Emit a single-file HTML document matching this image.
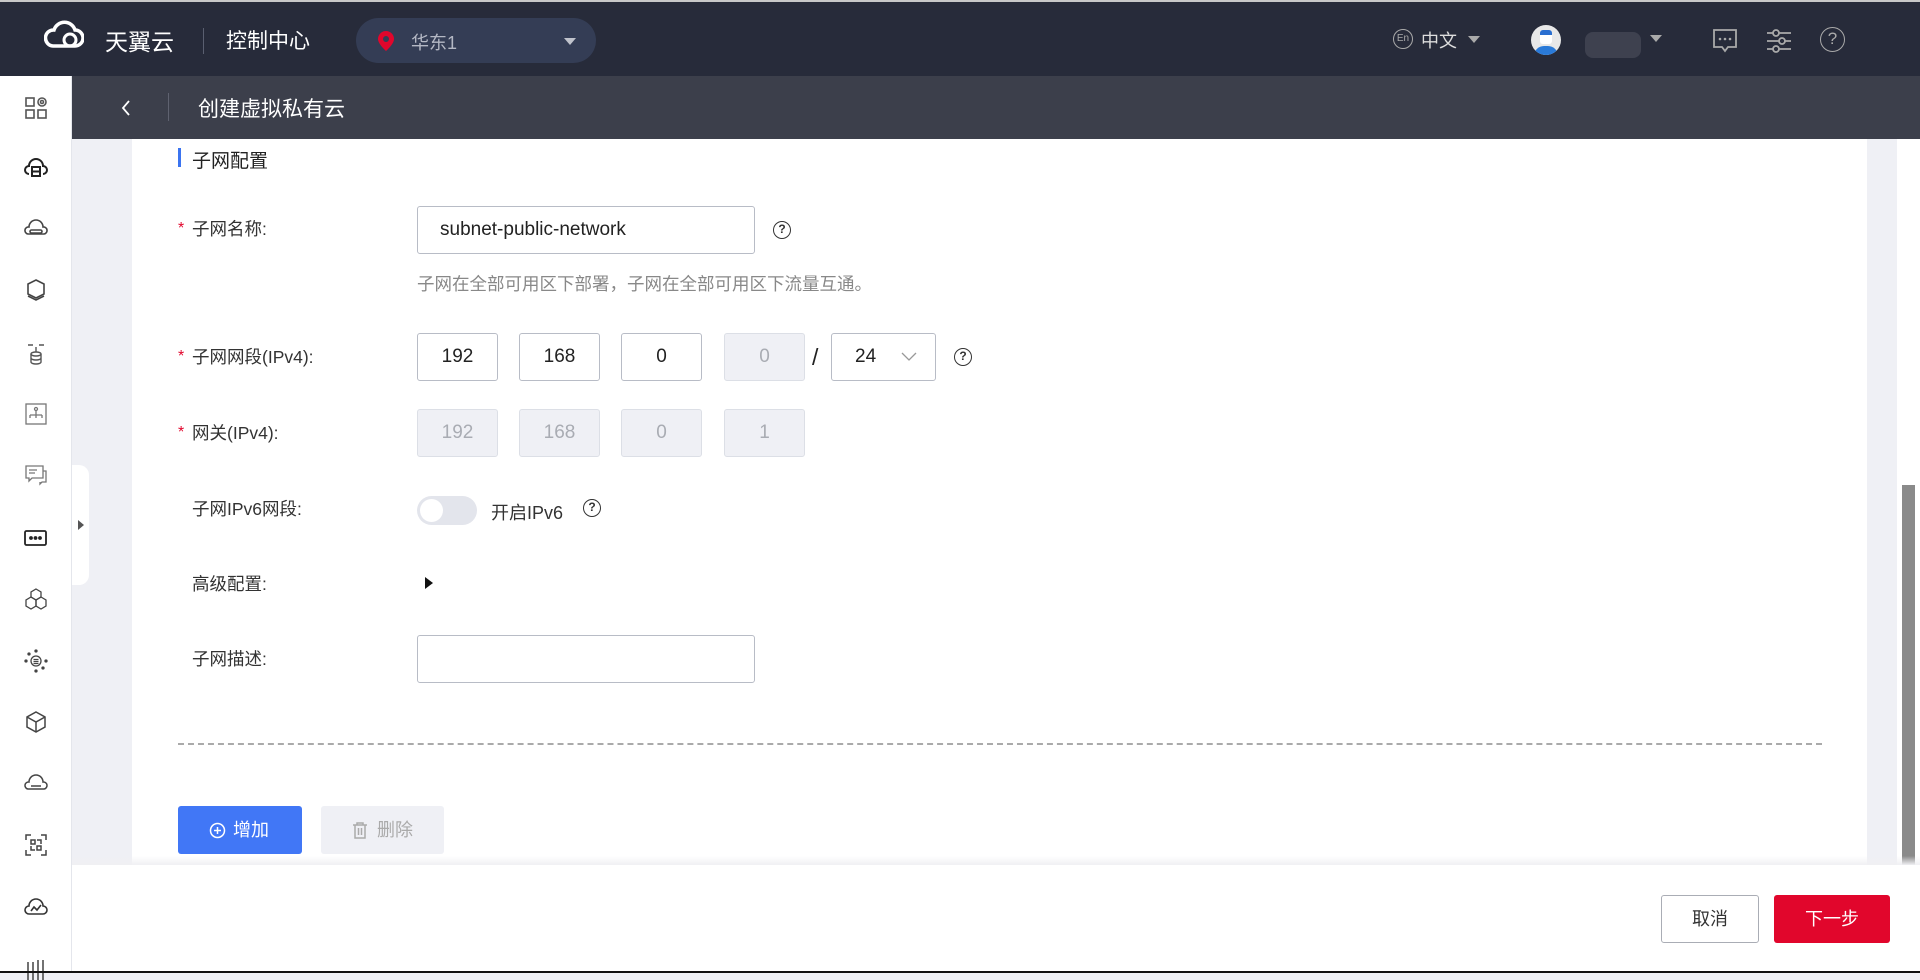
<!DOCTYPE html>
<html><head><meta charset="utf-8">
<style>
*{margin:0;padding:0;box-sizing:border-box}
body{width:1920px;height:973px;overflow:hidden;background:#eff0f5;font-family:"Liberation Sans","Noto Sans CJK SC",sans-serif;position:relative;color:#222}
.abs{position:absolute}
#top{left:0;top:0;width:1920px;height:76px;background:#272b3a;border-top:2px solid #c8c8c8}
#sub{left:72px;top:76px;width:1848px;height:63px;background:#3c3f4b}
#side{left:0;top:76px;width:72px;height:897px;background:#fff;border-right:1px solid #e4e6ec}
#card{left:132px;top:139px;width:1735px;height:726px;background:#fff}
.lbl{position:absolute;left:192px;font-size:17.5px;color:#333;line-height:20px}
.star{position:absolute;left:178px;color:#e1062c;font-size:16px;line-height:20px}
.inp{position:absolute;height:48px;border:1px solid #b8bcc6;border-radius:3px;background:#fff;font-size:19px;line-height:46px;text-align:center;color:#222}
.dis{background:#eff0f5;border-color:#dcdfe6;color:#a9acb3}
.q{position:absolute;width:18px;height:18px;border:1.5px solid #333;border-radius:50%;font-size:12px;line-height:15px;text-align:center;font-weight:bold;color:#333}
.ic{position:absolute;left:24px;width:24px;height:24px}
</style></head><body>
<div id="top" class="abs">
 <svg class="abs" style="left:44px;top:16px" width="40" height="34" viewBox="0 0 40 34"><path d="M9 28 H31 A8 8 0 0 0 31 12 A11 11 0 0 0 10 12 A8 8 0 0 0 9 28 Z" fill="none" stroke="#fff" stroke-width="3.5"/><circle cx="26" cy="22" r="6" fill="none" stroke="#fff" stroke-width="3"/></svg>
 <div class="abs" style="left:105px;top:21px;font-size:23px;color:#fff">天翼云</div>
 <div class="abs" style="left:203px;top:26px;width:1px;height:26px;background:#5a5f70"></div>
 <div class="abs" style="left:226px;top:23px;font-size:21px;color:#fff">控制中心</div>
 <div class="abs" style="left:356px;top:16px;width:240px;height:45px;border-radius:23px;background:#343d55">
  <svg class="abs" style="left:22px;top:13px" width="16" height="20" viewBox="0 0 16 20"><path d="M8 0 A8 8 0 0 1 16 8 C16 13 8 20 8 20 C8 20 0 13 0 8 A8 8 0 0 1 8 0Z" fill="#e1062c"/><circle cx="8" cy="8" r="3" fill="#343d55"/></svg>
  <div class="abs" style="left:55px;top:11px;font-size:18px;color:#b4b8c4">华东1</div>
  <div class="abs" style="left:208px;top:20px;border-left:6px solid transparent;border-right:6px solid transparent;border-top:7px solid #c0c3cc"></div>
 </div>
 <div class="abs" style="left:1393px;top:27px;width:20px;height:20px;border:1.5px solid #aaa;border-radius:50%;font-size:10px;color:#aaa;text-align:center;line-height:17px">En</div>
 <div class="abs" style="left:1421px;top:25px;font-size:18px;color:#ddd">中文</div>
 <div class="abs" style="left:1468px;top:34px;border-left:6px solid transparent;border-right:6px solid transparent;border-top:7px solid #aaa"></div>
 <div class="abs" style="left:1531px;top:23px;width:30px;height:30px;border-radius:50%;background:#e8e8e8;overflow:hidden"><div class="abs" style="left:9px;top:5px;width:12px;height:14px;background:#fff;border-top:5px solid #2a6fd0;border-radius:3px"></div><div class="abs" style="left:3px;top:21px;width:24px;height:12px;background:#2a7ad8;border-radius:10px 10px 0 0"></div></div>
 <div class="abs" style="left:1585px;top:30px;width:56px;height:26px;background:#3e414f;border-radius:8px"></div>
 <div class="abs" style="left:1650px;top:33px;border-left:6px solid transparent;border-right:6px solid transparent;border-top:7px solid #aaa"></div>
 <svg class="abs" style="left:1712px;top:26px" width="26" height="26" viewBox="0 0 26 26"><path d="M2 2H24V19H16L13 23L10 19H2Z" fill="none" stroke="#aaa" stroke-width="1.8"/><circle cx="8" cy="11" r="1.3" fill="#aaa"/><circle cx="13" cy="11" r="1.3" fill="#aaa"/><circle cx="18" cy="11" r="1.3" fill="#aaa"/></svg>
 <svg class="abs" style="left:1766px;top:26px" width="26" height="26" viewBox="0 0 26 26" fill="none" stroke="#aaa" stroke-width="1.8"><path d="M1 5H7M13 5H25M1 13H13M19 13H25M1 21H7M13 21H25"/><circle cx="10" cy="5" r="3"/><circle cx="16" cy="13" r="3"/><circle cx="10" cy="21" r="3"/></svg>
 <div class="abs" style="left:1820px;top:25px;width:25px;height:25px;border:1.8px solid #aaa;border-radius:50%;font-size:17px;color:#aaa;text-align:center;line-height:22px">?</div>
</div>
<div id="sub" class="abs">
 <svg class="abs" style="left:48px;top:23px" width="12" height="18" viewBox="0 0 12 18"><path d="M9 2L3 9L9 16" fill="none" stroke="#fff" stroke-width="1.8"/></svg>
 <div class="abs" style="left:96px;top:17px;width:1px;height:28px;background:#5f6270"></div>
 <div class="abs" style="left:126px;top:17px;font-size:21px;color:#fff">创建虚拟私有云</div>
</div>
<div id="side" class="abs">
 <svg class="ic" style="top:20px" viewBox="0 0 24 24" fill="none" stroke="#555" stroke-width="1.6"><rect x="2" y="2" width="8" height="8"/><rect x="2" y="14" width="8" height="8"/><rect x="14" y="14" width="8" height="8"/><circle cx="18" cy="6" r="4"/><circle cx="18" cy="6" r="1.5"/></svg>
 <svg class="ic" style="top:80px" viewBox="0 0 24 24" fill="none" stroke="#222" stroke-width="2"><path d="M5 18A4 4 0 0 1 5 10A7 7 0 0 1 19 10A4 4 0 0 1 19 18"/><rect x="8" y="11" width="8" height="9"/><path d="M8 15.5H16"/></svg>
 <svg class="ic" style="top:141px" viewBox="0 0 24 24" fill="none" stroke="#444" stroke-width="1.6"><path d="M4 17A3.5 3.5 0 0 1 5 10A7 7 0 0 1 19 10A3.5 3.5 0 0 1 20 17Z"/><rect x="6" y="13" width="12" height="3" rx="1.5"/></svg>
 <svg class="ic" style="top:202px" viewBox="0 0 24 24" fill="none" stroke="#444" stroke-width="1.6"><path d="M12 2L20 6V16L12 20L4 16V6Z"/><path d="M4 18L12 22L20 18"/></svg>
 <svg class="ic" style="top:265px" viewBox="0 0 24 24" fill="none" stroke="#555" stroke-width="1.4"><ellipse cx="12" cy="13" rx="5" ry="2"/><path d="M7 13V21A5 2 0 0 0 17 21V13M7 17A5 2 0 0 0 17 17M12 11V6M4 4H9M15 4H20"/></svg>
 <svg class="ic" style="top:326px" viewBox="0 0 24 24" fill="none" stroke="#777" stroke-width="1.3"><rect x="2" y="2" width="20" height="20"/><circle cx="12" cy="7" r="1.5"/><path d="M12 9V13M6 13H18M6 13V16M12 13V16M18 13V16"/></svg>
 <svg class="ic" style="top:387px" viewBox="0 0 24 24" fill="none" stroke="#777" stroke-width="1.3"><path d="M2 3H19V15H8L5 18V15H2Z"/><path d="M19 8H22V19H18L16 21V19"/><path d="M5 7H13M5 10H11"/></svg>
 <svg class="ic" style="top:450px" viewBox="0 0 24 24" fill="none" stroke="#222" stroke-width="1.8"><rect x="1" y="5" width="21" height="14" rx="1.5"/><circle cx="7" cy="12" r="1" fill="#222"/><circle cx="11.5" cy="12" r="1" fill="#222"/><circle cx="16" cy="12" r="1" fill="#222"/></svg>
 <svg class="ic" style="top:511px" viewBox="0 0 24 24" fill="none" stroke="#444" stroke-width="1.3"><path d="M12 2L17 5V10L12 13L7 10V5Z"/><path d="M7 10L12 13V19L7 22L2 19V13Z"/><path d="M17 10L22 13V19L17 22L12 19V13Z"/></svg>
 <svg class="ic" style="top:573px" viewBox="0 0 24 24" fill="none" stroke="#444" stroke-width="1.3"><circle cx="12" cy="12" r="5"/><path d="M9.5 10.5H14.5M9.5 12.5H14.5M9.5 14.5H14.5"/><circle cx="12" cy="2" r="1" fill="#444"/><circle cx="2" cy="12" r="1" fill="#444"/><circle cx="22" cy="12" r="1" fill="#444"/><circle cx="12" cy="22" r="1" fill="#444"/><circle cx="5" cy="5" r="1" fill="#444"/><circle cx="19" cy="19" r="1" fill="#444"/></svg>
 <svg class="ic" style="top:634px" viewBox="0 0 24 24" fill="none" stroke="#444" stroke-width="1.5"><path d="M12 2L21 7V17L12 22L3 17V7Z"/><path d="M3 7L12 12L21 7M12 12V22"/></svg>
 <svg class="ic" style="top:696px" viewBox="0 0 24 24" fill="none" stroke="#444" stroke-width="1.5"><path d="M4 17A3.5 3.5 0 0 1 5 10A7 7 0 0 1 19 10A3.5 3.5 0 0 1 20 17Z"/><path d="M7 14H17"/></svg>
 <svg class="ic" style="top:757px" viewBox="0 0 24 24" fill="none" stroke="#444" stroke-width="1.5"><path d="M2 7V2H7M17 2H22V7M22 17V22H17M7 22H2V17"/><rect x="7" y="7" width="4" height="4"/><rect x="13" y="13" width="4" height="4"/><path d="M13 7H17V11M7 13V17H11"/></svg>
 <svg class="ic" style="top:819px" viewBox="0 0 24 24" fill="none" stroke="#333" stroke-width="1.6"><path d="M5 19A4 4 0 0 1 5 11A7 7 0 0 1 19 11A4 4 0 0 1 19 19Z"/><path d="M7 16L10 12L13 15L17 10"/></svg>
 <svg class="ic" style="top:880px" viewBox="0 0 24 24" fill="none" stroke="#444" stroke-width="1.5"><path d="M4 6V24M9 6V24M14 4V24M19 4V24"/></svg>
</div>
<div class="abs" style="left:72px;top:465px;width:17px;height:120px;background:#fff;border-radius:0 10px 10px 0"></div>
<div class="abs" style="left:78px;top:520px;border-top:5px solid transparent;border-bottom:5px solid transparent;border-left:6px solid #555"></div>
<div id="card" class="abs"></div>
<div class="abs" style="left:178px;top:148px;width:3px;height:19px;background:#3b74f0"></div>
<div class="abs" style="left:192px;top:146px;font-size:19px;color:#222">子网配置</div>

<div class="star" style="top:219px">*</div><div class="lbl" style="top:219px">子网名称:</div>
<div class="inp" style="left:417px;top:206px;width:338px;text-align:left;padding-left:22px">subnet-public-network</div>
<div class="q" style="left:773px;top:221px">?</div>
<div class="abs" style="left:417px;top:271px;font-size:17.5px;color:#888">子网在全部可用区下部署，子网在全部可用区下流量互通。</div>

<div class="star" style="top:347px">*</div><div class="lbl" style="top:347px">子网网段(IPv4):</div>
<div class="inp" style="left:417px;top:333px;width:81px">192</div>
<div class="inp" style="left:519px;top:333px;width:81px">168</div>
<div class="inp" style="left:621px;top:333px;width:81px">0</div>
<div class="inp dis" style="left:724px;top:333px;width:81px">0</div>
<div class="abs" style="left:812px;top:344px;font-size:23px;color:#222">/</div>
<div class="inp" style="left:831px;top:333px;width:105px;text-align:left;padding-left:23px">24</div>
<svg class="abs" style="left:901px;top:352px" width="16" height="10" viewBox="0 0 16 10"><path d="M1 1L8 8L15 1" fill="none" stroke="#999" stroke-width="1.3"/></svg>
<div class="q" style="left:954px;top:348px">?</div>

<div class="star" style="top:423px">*</div><div class="lbl" style="top:423px">网关(IPv4):</div>
<div class="inp dis" style="left:417px;top:409px;width:81px">192</div>
<div class="inp dis" style="left:519px;top:409px;width:81px">168</div>
<div class="inp dis" style="left:621px;top:409px;width:81px">0</div>
<div class="inp dis" style="left:724px;top:409px;width:81px">1</div>

<div class="lbl" style="top:499px">子网IPv6网段:</div>
<div class="abs" style="left:417px;top:496px;width:60px;height:29px;border-radius:15px;background:#e3e5ec"><div class="abs" style="left:3px;top:3px;width:23px;height:23px;border-radius:50%;background:#fff"></div></div>
<div class="abs" style="left:491px;top:499px;font-size:18px;color:#333">开启IPv6</div>
<div class="q" style="left:583px;top:499px">?</div>

<div class="lbl" style="top:574px">高级配置:</div>
<div class="abs" style="left:425px;top:577px;border-top:6px solid transparent;border-bottom:6px solid transparent;border-left:8px solid #111"></div>

<div class="lbl" style="top:649px">子网描述:</div>
<div class="inp" style="left:417px;top:635px;width:338px"></div>

<div class="abs" style="left:178px;top:743px;width:1644px;border-top:2px dashed #aaa"></div>

<div class="abs" style="left:178px;top:806px;width:124px;height:48px;background:#4177f6;border-radius:3px;color:#fff;font-size:18px;line-height:48px">
 <svg class="abs" style="left:31px;top:16px" width="17" height="17" viewBox="0 0 17 17" fill="none" stroke="#fff" stroke-width="1.5"><circle cx="8.5" cy="8.5" r="7"/><path d="M8.5 5V12M5 8.5H12"/></svg>
 <span class="abs" style="left:55px">增加</span></div>
<div class="abs" style="left:321px;top:806px;width:123px;height:48px;background:#eff0f5;border-radius:3px;color:#aaa;font-size:18px;line-height:48px">
 <svg class="abs" style="left:31px;top:16px" width="16" height="17" viewBox="0 0 16 17" fill="none" stroke="#aaa" stroke-width="1.5"><path d="M1 3H15M5 3V1H11V3M3 3V16H13V3M6.5 6V13M9.5 6V13"/></svg>
 <span class="abs" style="left:56px">删除</span></div>

<div class="abs" style="left:1897px;top:139px;width:23px;height:726px;background:#fff"></div>
<div class="abs" style="left:1902px;top:485px;width:13px;height:380px;background:#8a8a8a"></div>
<div class="abs" style="left:72px;top:856px;width:1848px;height:9px;background:linear-gradient(rgba(240,240,243,0),#f0f0f3)"></div>
<div class="abs" style="left:72px;top:865px;width:1848px;height:106px;background:#fff"></div>
<div class="abs" style="left:0;top:971px;width:1920px;height:2px;background:#111"></div>
<div class="abs" style="left:1661px;top:895px;width:98px;height:48px;border:1px solid #aaadb5;border-radius:3px;background:#fff;text-align:center;line-height:46px;font-size:18px;color:#333">取消</div>
<div class="abs" style="left:1774px;top:895px;width:116px;height:48px;background:#e1062c;border-radius:3px;text-align:center;line-height:48px;font-size:18px;color:#fff">下一步</div>
</body></html>
